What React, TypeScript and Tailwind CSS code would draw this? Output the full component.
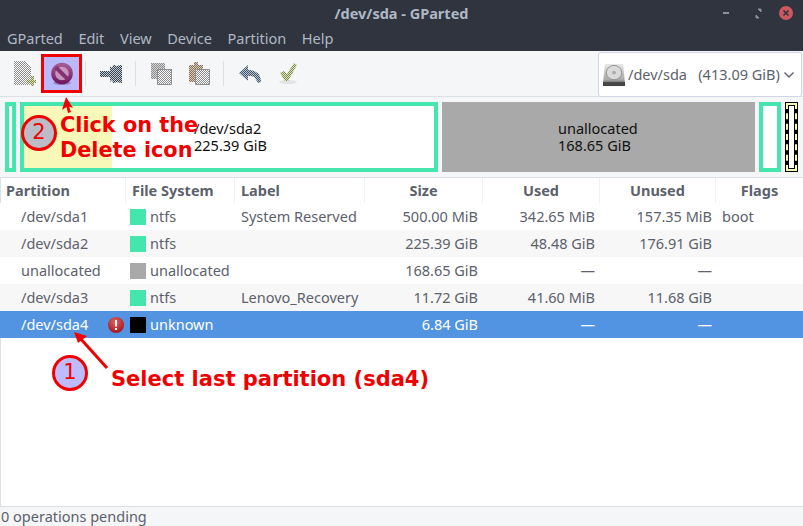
import React from "react";

const UI = { fontFamily: '"Noto Sans", "Open Sans", sans-serif' };
const ANN = { fontFamily: '"DejaVu Sans", sans-serif' };

const rows = [
  { p: "/dev/sda1", c: "bg-[#45e6ad]", fs: "ntfs", l: "System Reserved", s: "500.00 MiB", u: "342.65 MiB", f: "157.35 MiB", fl: "boot", bg: "bg-white" },
  { p: "/dev/sda2", c: "bg-[#45e6ad]", fs: "ntfs", l: "", s: "225.39 GiB", u: "48.48 GiB", f: "176.91 GiB", fl: "", bg: "bg-[#f7f7f7]" },
  { p: "unallocated", c: "bg-[#a9a9a9]", fs: "unallocated", l: "", s: "168.65 GiB", u: "—", f: "—", fl: "", bg: "bg-white" },
  { p: "/dev/sda3", c: "bg-[#45e6ad]", fs: "ntfs", l: "Lenovo_Recovery", s: "11.72 GiB", u: "41.60 MiB", f: "11.68 GiB", fl: "", bg: "bg-[#f7f7f7]" },
];

const grid = "grid grid-cols-[126px_109px_130px_118px_117px_116px_87px]";

function Checker({ id, c, b = "#ffffff" }: { id: string; c: string; b?: string }) {
  return (
    <pattern id={id} width="2" height="2" patternUnits="userSpaceOnUse">
      <rect width="2" height="2" fill={b} />
      <rect width="1" height="1" fill={c} />
      <rect x="1" y="1" width="1" height="1" fill={c} />
    </pattern>
  );
}

function Defs() {
  return (
    <svg width="0" height="0" className="absolute">
      <defs>
        <Checker id="gr" c="#8c8c8c" />
        <Checker id="grd" c="#8c8c8c" b="#d6d6d6" />
        <Checker id="bl" c="#3f5369" b="#b9c4d0" />
        <Checker id="gn" c="#7d8a45" b="#dfe3c4" />
        <Checker id="br" c="#8a6f52" b="#d8cdbf" />
        <Checker id="dk" c="#36424e" b="#c3cbd3" />
        <linearGradient id="del" x1="0" y1="0" x2="0" y2="1">
          <stop offset="0" stopColor="#a45a90" />
          <stop offset="1" stopColor="#711a60" />
        </linearGradient>
        <radialGradient id="err" cx="45%" cy="30%" r="70%">
          <stop offset="0" stopColor="#e4605c" />
          <stop offset="1" stopColor="#a31621" />
        </radialGradient>
        <linearGradient id="hd" x1="0" y1="0" x2="0" y2="1">
          <stop offset="0" stopColor="#e9e9e9" />
          <stop offset="0.75" stopColor="#a8a8a8" />
          <stop offset="1" stopColor="#3d3d3d" />
        </linearGradient>
      </defs>
    </svg>
  );
}

function Sep({ cls }: { cls: string }) {
  return <div className={"w-px h-[25px] bg-[#dcdfe3] shrink-0 " + cls} />;
}

function Toolbar() {
  return (
    <div className="h-[46px] flex items-center bg-[#f5f6f7] border-b border-[#dcdfe3] relative">
      <svg width="22" height="25" viewBox="0 0 22 25" className="ml-[14px] shrink-0">
        <path d="M0 0h11l6 6v18H0z" fill="url(#gr)" />
        <path d="M13 19h4v-4h3v4h2v3h-2v3h-3v-3h-4z" fill="url(#gn)" />
      </svg>
      <div className="ml-[5px] w-[41px] h-[39px] box-border border-[3px] border-[#f00000] bg-[#b9b9fb] flex items-center justify-center shrink-0">
        <svg width="24" height="24" viewBox="0 0 24 24">
          <ellipse cx="12" cy="21" rx="9" ry="2" fill="#9a8ad0" />
          <circle cx="12" cy="11.5" r="8.8" fill="#c696c0" stroke="url(#del)" strokeWidth="4" />
          <path d="M5.8 5.3l12.4 12.4" stroke="#86306f" strokeWidth="4" />
        </svg>
      </div>
      <Sep cls="ml-[3px]" />
      <svg width="22" height="18" viewBox="0 0 22 18" className="ml-[14px] shrink-0">
        <path d="M0 6h10V1l2 2 1-3h2l1 1 5-1h1v18h-1l-5-1-1 1h-2l-1-3-2 2v-5H0z" fill="url(#dk)" />
      </svg>
      <Sep cls="ml-[13px]" />
      <svg width="21" height="22" viewBox="0 0 21 22" className="ml-[15px] shrink-0">
        <path d="M0 0h14v6h7v16H7v-6H0z" fill="url(#grd)" />
        <path d="M6.5 6.5h14v15h-14z" fill="url(#gr)" stroke="#8f8f8f" strokeWidth="1" />
      </svg>
      <svg width="21" height="23" viewBox="0 0 21 23" className="ml-[17px] shrink-0">
        <path d="M0 3h5V0h4v3h5v17H0z" fill="url(#br)" />
        <path d="M6.5 7.5h14v15h-14z" fill="url(#gr)" stroke="#8f8f8f" strokeWidth="1" />
      </svg>
      <Sep cls="ml-[13px]" />
      <svg width="22" height="18" viewBox="0 0 22 18" className="ml-[15px] shrink-0">
        <path d="M9 0v5c7 0 13 3 13 12l-3 1-3-5c-2-2-4-2-7-2v5L0 8z" fill="url(#bl)" />
      </svg>
      <svg width="19" height="21" viewBox="0 0 19 21" className="ml-[18px] shrink-0">
        <ellipse cx="9" cy="19" rx="9" ry="2" fill="#e3e4e4" />
        <path d="M1 10l4-2 3 3 7-11 3 2-9 16H6z" fill="url(#gn)" />
      </svg>
      <div className="ml-auto self-start mt-[1px] mr-[1px] w-[204px] h-[45px] box-border border border-[#cfd6e6] rounded-[3px] bg-white flex items-center pl-[3px] text-[#5c616c] text-[14.5px]">
        <svg width="24" height="24" viewBox="0 0 25 25" className="shrink-0">
          <path d="M3 1h19l2 20v2H1v-2z" fill="url(#hd)" />
          <ellipse cx="12.5" cy="10" rx="8" ry="7.5" fill="#dadada" stroke="#8f8f8f" />
          <circle cx="12.5" cy="10" r="2" fill="#aaa" />
          <rect x="1" y="20" width="23" height="4" fill="#454545" />
        </svg>
        <span className="ml-[2px] whitespace-pre">/dev/sda   (413.09 GiB)</span>
        <svg width="12" height="12" viewBox="0 0 12 12" className="ml-auto mr-[6px]">
          <path d="M1.5 3.5L6 8l4.5-4.5" fill="none" stroke="#5c616c" strokeWidth="1.4" />
        </svg>
      </div>
    </div>
  );
}

function BarLabel({ a, b }: { a: string; b: string }) {
  return (
    <div className="text-[14.5px] leading-[17px] text-[#101010] whitespace-nowrap">
      <div>{a}</div>
      <div>{b}</div>
    </div>
  );
}

function PartBar() {
  return (
    <div className="h-[80px] bg-[#f5f6f7] flex gap-[4px] px-[5px] py-[5px] shrink-0">
      <div className="w-[11px] box-border border-[4px] border-[#45e6ad] bg-white" />
      <div className="w-[418px] box-border border-[4px] border-[#45e6ad] bg-white flex">
        <div className="w-[88px] bg-[#f8f8b8]" />
        <div className="ml-[82px] self-center"><BarLabel a="/dev/sda2" b="225.39 GiB" /></div>
      </div>
      <div className="w-[313px] bg-[#a9a9a9] flex items-center pl-[116px]">
        <BarLabel a="unallocated" b="168.65 GiB" />
      </div>
      <div className="w-[22px] box-border border-[4px] border-[#45e6ad] bg-white" />
      <div className="w-[13px] box-border bg-black p-[1px]">
        <div className="h-full box-border border-2 border-dashed border-[#f8f8b8] bg-black p-[1px]">
          <div className="h-full bg-white" />
        </div>
      </div>
    </div>
  );
}

function Table() {
  const heads = ["Partition", "File System", "Label", "Size", "Used", "Unused", "Flags"];
  return (
    <div className="flex-1 bg-white border-t border-[#dcdfe3] border-l border-l-[#dcdfe3] text-[14.5px] text-[#5c616c]">
      <div className={grid + " h-[25px] -ml-px"}>
        {heads.map((h, i) => (
          <div key={h} className={"flex items-center font-bold text-[14.5px] text-[#5c616c] " + (i < 3 ? "pl-[6px] " : "justify-center ") + (i < 6 ? "border-r border-[#f0f1f2]" : "")}>
            {h}
          </div>
        ))}
      </div>
      {rows.map((r) => (
        <Row key={r.p} r={r} />
      ))}
      <div className={grid + " h-[27px] bg-[#5294e2] text-white -ml-px items-center"}>
        <div className="pl-[21px] pr-[2px] flex items-center justify-between">
          <span>/dev/sda4</span>
          <svg width="16" height="16" viewBox="0 0 16 16">
            <circle cx="8" cy="8" r="8" fill="url(#err)" />
            <rect x="7" y="3" width="2" height="6.5" fill="#fff" />
            <rect x="7" y="11" width="2" height="2" fill="#fff" />
          </svg>
        </div>
        <div className="flex items-center pl-[4px] gap-[4px]">
          <span className="w-4 h-4 bg-black" />
          <span>unknown</span>
        </div>
        <div />
        <div className="text-right pr-[5px]">6.84 GiB</div>
        <div className="text-right pr-[5px]">—</div>
        <div className="text-right pr-[4px]">—</div>
        <div />
      </div>
    </div>
  );
}

function Row({ r }: { r: (typeof rows)[number] }) {
  return (
    <div className={grid + " h-[27px] -ml-px items-center " + r.bg}>
      <div className="pl-[21px]">{r.p}</div>
      <div className="flex items-center pl-[4px] gap-[4px]">
        <span className={"w-4 h-4 " + r.c} />
        <span>{r.fs}</span>
      </div>
      <div className="pl-[6px]">{r.l}</div>
      <div className="text-right pr-[5px]">{r.s}</div>
      <div className="text-right pr-[5px]">{r.u}</div>
      <div className="text-right pr-[4px]">{r.f}</div>
      <div className="pl-[6px]">{r.fl}</div>
    </div>
  );
}

function Badge({ n, bg, cls }: { n: string; bg: string; cls: string }) {
  return (
    <div className={"absolute w-[36px] h-[36px] rounded-full border-[3px] border-[#f00000] flex items-center justify-center text-[#f00000] text-[21px] " + bg + " " + cls} style={ANN}>
      {n}
    </div>
  );
}

function Annotations() {
  return (
    <>
      <svg className="absolute left-0 top-0 pointer-events-none" width="803" height="526">
        <path d="M107 368L79 337" stroke="#f00000" strokeWidth="3" fill="none" />
        <path d="M74 332l13 4-9 7z" fill="#f00000" />
        <path d="M66 97L62 110L66.5 107L68 113L71 112L69 106.5L73 108z" fill="#f00000" />
      </svg>
      <Badge n="1" bg="bg-[#bcbcff]" cls="left-[52px] top-[355px]" />
      <Badge n="2" bg="bg-[#bcbcc8]" cls="left-[21px] top-[115px]" />
      <div className="absolute left-[60px] top-[113px] text-[#f00000] font-bold text-[20.8px] leading-[25px] whitespace-nowrap" style={ANN}>
        <div>Click on the</div>
        <div>Delete icon</div>
      </div>
      <div className="absolute left-[111px] top-[367px] text-[#f00000] font-bold text-[21px] leading-[25px] whitespace-nowrap" style={ANN}>
        Select last partition (sda4)
      </div>
    </>
  );
}

export default function App() {
  return (
    <div className="relative w-[803px] h-[526px] overflow-hidden bg-[#f5f6f7] flex flex-col" style={UI}>
      <Defs />
      <div className="h-[51px] bg-[#2f343f] shrink-0 flex flex-col">
        <div className="h-[27px] flex items-center relative">
          <div className="w-full text-center font-bold text-[14.5px] text-[#afb8c5]">/dev/sda - GParted</div>
          <svg className="absolute left-[720px] top-[6px]" width="75" height="16" viewBox="0 0 75 16">
            <rect x="3" y="6" width="6" height="2" fill="#8a919c" />
            <path d="M36 9v3h3zM41 3h-3l3 3z" fill="#8a919c" stroke="#8a919c" />
            <circle cx="66" cy="7" r="7" fill="#cc575d" />
            <path d="M63.5 4.5l5 5M68.5 4.5l-5 5" stroke="#2f343f" strokeWidth="1.6" />
          </svg>
        </div>
        <div className="h-[23px] flex items-center pl-[7px] gap-[15.6px] text-[14.5px] text-[#afb8c5]">
          {["GParted", "Edit", "View", "Device", "Partition", "Help"].map((m) => (
            <span key={m}>{m}</span>
          ))}
        </div>
      </div>
      <Toolbar />
      <PartBar />
      <Table />
      <div className="h-[20px] shrink-0 bg-[#f5f6f7] border-t border-[#dcdfe3] flex items-center pl-[1px] text-[14.5px] text-[#5c616c]">
        0 operations pending
      </div>
      <Annotations />
    </div>
  );
}
